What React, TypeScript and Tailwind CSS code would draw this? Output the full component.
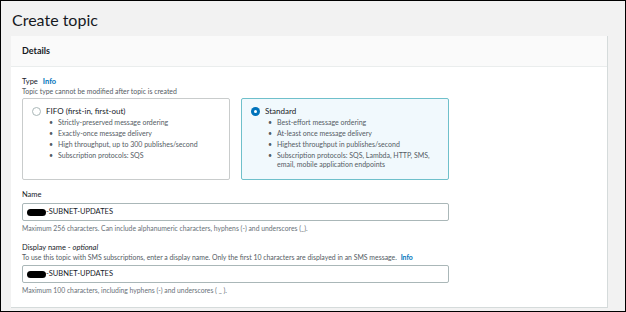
import { ReactNode } from "react";

function Radio({ checked }: { checked: boolean }) {
  return checked ? (
    <span className="mt-[1px] flex h-[9px] w-[9px] shrink-0 items-center justify-center rounded-full bg-[#0073bb]">
      <span className="h-[3px] w-[3px] rounded-full bg-white"></span>
    </span>
  ) : (
    <span className="mt-[1px] h-[9px] w-[9px] shrink-0 rounded-full border border-[#aab7b8] bg-white"></span>
  );
}

function TypeCard({
  title,
  items,
  checked,
}: {
  title: string;
  items: string[];
  checked: boolean;
}) {
  return (
    <div
      className={`flex h-[82px] w-[208px] gap-[5px] rounded-[2px] border px-[9px] pt-[7px] ${
        checked ? "border-[#6fc0cb] bg-[#f1f9fd]" : "border-[#c9cccc] bg-white"
      }`}
    >
      <Radio checked={checked} />
      <div>
        <div className="text-[8px] leading-[11px] text-[#16191f]">{title}</div>
        <ul className="mt-[1px] flex flex-col gap-[2.5px] pl-[3px]">
          {items.map((item) => (
            <li key={item} className="flex gap-[5px] text-[7px] leading-[8.5px] text-[#545b64]">
              <span>•</span>
              <span>{item}</span>
            </li>
          ))}
        </ul>
      </div>
    </div>
  );
}

function Field({
  label,
  hint,
  children,
  footer,
}: {
  label: ReactNode;
  hint?: ReactNode;
  children: ReactNode;
  footer: string;
}) {
  return (
    <div>
      <div className="text-[7.5px] leading-[10px] text-[#16191f]">{label}</div>
      {hint && <div className="text-[6.9px] leading-[9px] text-[#545b64]">{hint}</div>}
      <div className="mt-[3px]">{children}</div>
      <div className="mt-[3px] text-[6.8px] leading-[9px] text-[#687078]">{footer}</div>
    </div>
  );
}

function RedactedInput() {
  return (
    <div className="flex h-[18px] w-[427px] items-center rounded-[2px] border border-[#aab7b8] bg-white pl-[4px] text-[7.5px] text-[#16191f]">
      <span className="h-[7px] w-[19px] rounded-full bg-black"></span>
      <span>-SUBNET-UPDATES</span>
    </div>
  );
}

export default function App() {
  return (
    <div className="h-[312px] w-[626px] overflow-hidden border border-black bg-[#f2f2f2] font-['Lato',sans-serif]">
      <h1 className="pl-[11px] pt-[4px] text-[16px] leading-[29px] text-[#16191f]">Create topic</h1>

      <div className="ml-[10px] mt-[2px] w-[597px] border-b border-r border-[#d5dbdb] bg-white">
        <div className="flex h-[31px] items-center border-b border-[#eaeded] bg-[#fafafa] px-[11px]">
          <span className="text-[9px] font-bold text-[#16191f]">Details</span>
        </div>

        <div className="flex flex-col gap-[10px] px-[11px] pb-[12px] pt-[10px]">
          <div>
            <div className="flex gap-[5px] text-[7.5px] leading-[10px] text-[#16191f]">
              Type <span className="font-bold text-[#0073bb]">Info</span>
            </div>
            <div className="text-[6.9px] leading-[9px] text-[#545b64]">
              Topic type cannot be modified after topic is created
            </div>
            <div className="mt-[2px] flex gap-[11px]">
              <TypeCard
                title="FIFO (first-in, first-out)"
                checked={false}
                items={[
                  "Strictly-preserved message ordering",
                  "Exactly-once message delivery",
                  "High throughput, up to 300 publishes/second",
                  "Subscription protocols: SQS",
                ]}
              />
              <TypeCard
                title="Standard"
                checked
                items={[
                  "Best-effort message ordering",
                  "At-least once message delivery",
                  "Highest throughput in publishes/second",
                  "Subscription protocols: SQS, Lambda, HTTP, SMS, email, mobile application endpoints",
                ]}
              />
            </div>
          </div>

          <Field
            label="Name"
            footer="Maximum 256 characters. Can include alphanumeric characters, hyphens (-) and underscores (_)."
          >
            <RedactedInput />
          </Field>

          <Field
            label={
              <>
                Display name - <i>optional</i>
              </>
            }
            hint={
              <>
                To use this topic with SMS subscriptions, enter a display name. Only the first 10 characters are displayed in an SMS message.{" "}
                <span className="ml-[2px] font-bold text-[#0073bb]">Info</span>
              </>
            }
            footer="Maximum 100 characters, including hyphens (-) and underscores ( _ )."
          >
            <RedactedInput />
          </Field>
        </div>
      </div>
    </div>
  );
}
